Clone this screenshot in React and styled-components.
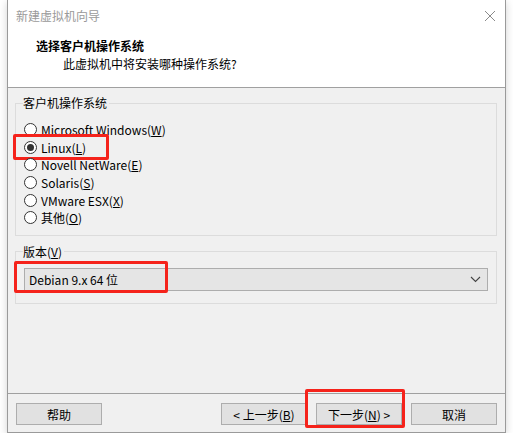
import styled, { createGlobalStyle } from 'styled-components'

const radios = [
    { label: 'Microsoft Windows', key: 'W' },
    { label: 'Linux', key: 'L', checked: true, mark: true },
    { label: 'Novell NetWare', key: 'E' },
    { label: 'Solaris', key: 'S' },
    { label: 'VMware ESX', key: 'X' },
    { label: '其他', key: 'O' },
]

export default function App () {
    return (
        <>
            <Global />
            <Window>
                <Header>
                    <TitleRow>
                        <Title>新建虚拟机向导</Title>
                        <Close width="12" height="12" viewBox="0 0 12 12">
                            <path d="M1 1L11 11M11 1L1 11" stroke="#8a8a8a" strokeWidth="1" />
                        </Close>
                    </TitleRow>
                    <Heading>选择客户机操作系统</Heading>
                    <SubHeading>此虚拟机中将安装哪种操作系统?</SubHeading>
                </Header>

                <Body>
                    <Group $pt={10} $pb={8}>
                        <Legend>客户机操作系统</Legend>
                        {radios.map(r => (
                            <RadioRow key={r.key}>
                                {r.mark && <Mark $l={-11} $t={-5} $w={96} $h={26} />}
                                <Circle $on={r.checked} />
                                <span>{r.label}(<U>{r.key}</U>)</span>
                            </RadioRow>
                        ))}
                    </Group>

                    <Group $pt={8} $pb={12} $mt={8}>
                        <Legend>版本(<U>V</U>)</Legend>
                        <Select>
                            <Mark $l={-11} $t={-8} $w={154} $h={32} />
                            <span>Debian 9.x 64 位</span>
                            <svg width="11" height="7" viewBox="0 0 11 7">
                                <path d="M1 1L5.5 5.5L10 1" fill="none" stroke="#444" strokeWidth="1.1" />
                            </svg>
                        </Select>
                    </Group>
                </Body>

                <Footer>
                    <Button>帮助</Button>
                    <Spacer />
                    <Button>&lt; 上一步(<U>B</U>)</Button>
                    <Button>
                        <Mark $l={-12} $t={-15} $w={100} $h={39} />
                        下一步(<U>N</U>) &gt;
                    </Button>
                    <Button>取消</Button>
                </Footer>
            </Window>
        </>
    )
};


//styles______________________________________________
const Global = createGlobalStyle`
    body {
        margin: 0;
        background: #ffffff;
        font-family: "Noto Sans CJK SC", "Noto Sans", sans-serif;
        font-size: 12px;
        color: #000;
    }
`;
const Window = styled.div`
    margin-left: 7px;
    width: 497px;
    height: 432px;
    display: flex;
    flex-direction: column;
    background: #f0f0f0;
    border: 1px solid #9a9a9a;
    border-top: none;
    box-shadow: 0 2px 8px rgba(0,0,0,0.18);
`;
const Header = styled.div`
    height: 87px;
    background: #fff;
    border-bottom: 1px solid #a0a0a0;
    display: flex;
    flex-direction: column;
`;
const TitleRow = styled.div`
    height: 31px;
    display: flex;
    align-items: center;
    justify-content: space-between;
    padding: 0 9px 0 8px;
`;
const Title = styled.div`
    color: #9a9a9a;
    line-height: 16px;
`;
const Close = styled.svg`
    margin-top: 1px;
`;
const Heading = styled.div`
    margin-top: 7px;
    padding-left: 28px;
    font-weight: bold;
    line-height: 16px;
`;
const SubHeading = styled.div`
    margin-top: 2px;
    padding-left: 55px;
    line-height: 16px;
`;
const Body = styled.div`
    flex: 1;
    padding: 7px 8px 0 7px;
`;
const Group = styled.fieldset`
    margin: ${p => p.$mt || 0}px 0 0 0;
    padding: ${p => p.$pt}px 8px ${p => p.$pb}px 8px;
    border: 1px solid #dcdcdc;
    min-width: 0;
`;
const Legend = styled.legend`
    padding: 0 2px 0 0;
    margin-left: -1px;
    line-height: 16px;
`;
const RadioRow = styled.div`
    position: relative;
    height: 17.6px;
    display: flex;
    align-items: center;
    gap: 4px;
    white-space: nowrap;
`;
const Circle = styled.span`
    box-sizing: border-box;
    width: 13px;
    height: 13px;
    border-radius: 50%;
    border: 1px solid #333;
    background: #fff;
    display: flex;
    align-items: center;
    justify-content: center;

    &::after {
        content: "";
        width: 7px;
        height: 7px;
        border-radius: 50%;
        background: ${p => p.$on ? '#333' : 'transparent'};
    }
`;
const U = styled.span`
    text-decoration: underline;
`;
const Mark = styled.div`
    position: absolute;
    left: ${p => p.$l}px;
    top: ${p => p.$t}px;
    width: ${p => p.$w}px;
    height: ${p => p.$h}px;
    box-sizing: border-box;
    border: 3px solid #f5231b;
    border-radius: 2px;
    pointer-events: none;
`;
const Select = styled.div`
    position: relative;
    box-sizing: border-box;
    height: 23px;
    background: #e5e5e5;
    border: 1px solid #adadad;
    display: flex;
    align-items: center;
    justify-content: space-between;
    padding: 0 6px 0 4px;
`;
const Footer = styled.div`
    border-top: 1px solid #a0a0a0;
    height: 39px;
    box-sizing: border-box;
    padding: 9px 8px 0 8px;
    display: flex;
    gap: 9px;
`;
const Spacer = styled.div`
    flex: 1;
`;
const Button = styled.div`
    position: relative;
    box-sizing: border-box;
    width: 86px;
    height: 22px;
    background: #e1e1e1;
    border: 1px solid #adadad;
    display: flex;
    align-items: center;
    justify-content: center;
    white-space: pre;
`;
